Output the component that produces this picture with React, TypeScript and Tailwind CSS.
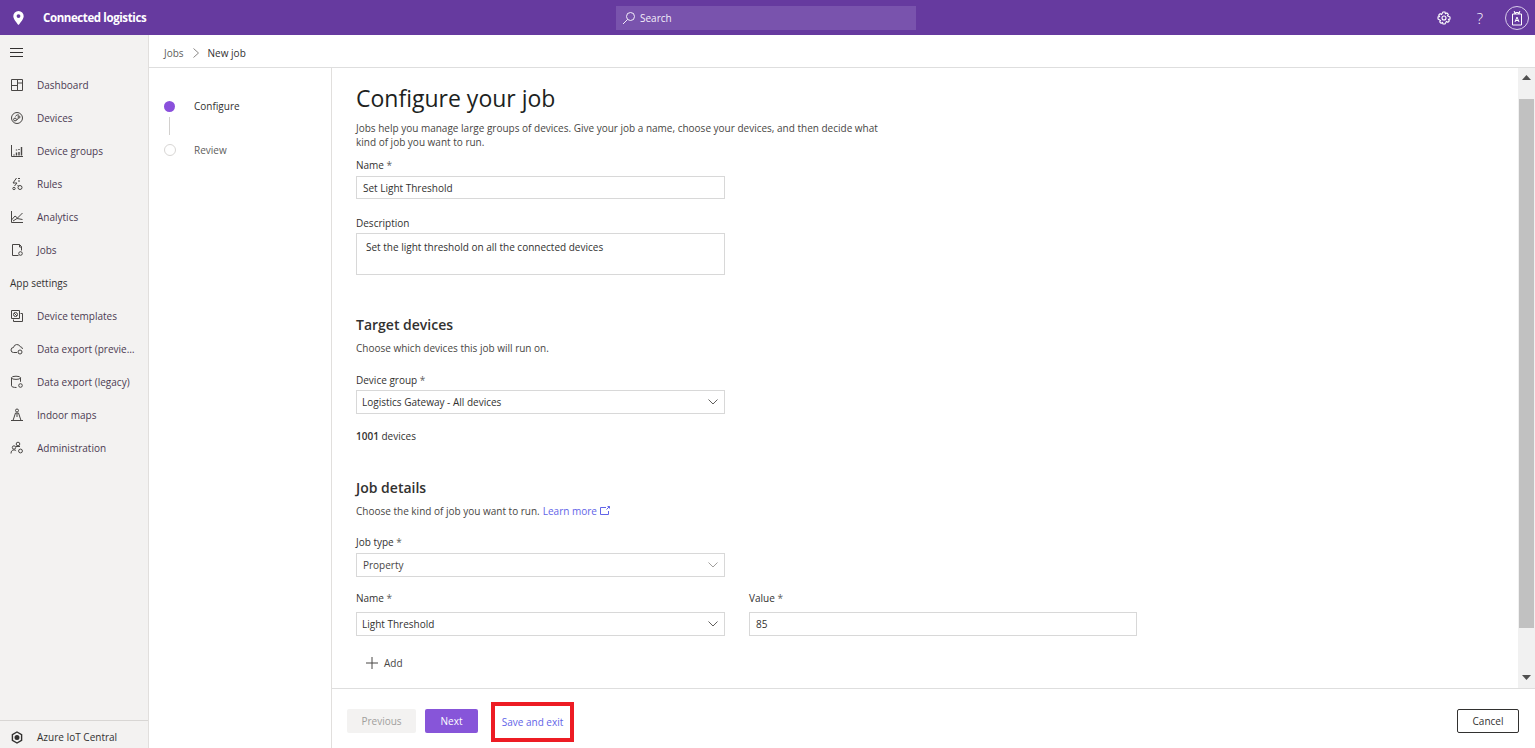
import React from "react";

const S = ({ children, size = 14, sw = 1 }: { children: React.ReactNode; size?: number; sw?: number }) => (
  <svg width={size} height={size} viewBox="0 0 14 14" fill="none" stroke="currentColor" strokeWidth={sw}>{children}</svg>
);

const icons: Record<string, React.ReactNode> = {
  dashboard: <S><path d="M1.5 1.5h11v11h-11zM1.5 7.5h6M7.5 1.5v11M7.5 5h5" /></S>,
  devices: <S><circle cx="7" cy="7" r="5.5" /><circle cx="5" cy="8.5" r="1.4" /><circle cx="9" cy="6" r="1" /><path d="M5.5 5.5C6 4 8 3.5 9 4.2M6.5 9.5l2-2.5" /></S>,
  groups: <S><path d="M1.5 1v11.5h11.5" /><path d="M4 10.5v1M6.5 8.5v3M6.5 5.5v1M9 8v3.5M9 5v1M11.5 3v8.5" strokeWidth="1.4" /></S>,
  rules: <S><path d="M6.5 1L3 6h4L4.5 9M8 1.5h2M8 4h2" /><circle cx="10" cy="10.5" r="2" /><circle cx="4" cy="11.5" r="1.2" /><path d="M7.5 8l1 1" /></S>,
  analytics: <S><path d="M1.5 1v11.5H13" /><path d="M1.5 10l3.5-4 2.5 2L12.5 3M3 11l4-2.5 5.5 1" /></S>,
  jobs: <S><path d="M8.5 12.5h-6v-11h7l2 2v4" /><circle cx="10.5" cy="10.5" r="1.8" /><path d="M9.5 1.5v2.5h2" /></S>,
  templates: <S><path d="M1.5 1.5h8v8h-8z" /><path d="M3.5 10.5v2h9v-8h-2" /><circle cx="5.5" cy="5.5" r="2" /><path d="M4 4l3 3" /></S>,
  cloud: <S><path d="M7 10.5H3.5a2.5 2.5 0 0 1 0-5 3.5 3.5 0 0 1 6.7-.8A2.5 2.5 0 0 1 12.5 7" /><circle cx="10" cy="10" r="2" /></S>,
  db: <S><ellipse cx="6" cy="2.8" rx="4.5" ry="1.6" /><path d="M1.5 2.8v8c0 1 2 1.7 5 1.7M10.5 2.8v4" /><circle cx="10.5" cy="10.5" r="1.8" /></S>,
  maps: <S><circle cx="7" cy="2.5" r="1.5" /><path d="M5.5 5h3L11 12.5H3zM1 12.5h12M7 5v4" /></S>,
  admin: <S><circle cx="8" cy="3" r="1.8" /><circle cx="4" cy="6.5" r="1.7" /><path d="M1 12.5c0-2.5 1.3-3.6 3-3.6 1 0 1.6.3 2.1.8M6 5.5h4" /><circle cx="10.5" cy="10" r="1.9" /></S>,
};

const nav1 = [["dashboard", "Dashboard"], ["devices", "Devices"], ["groups", "Device groups"], ["rules", "Rules"], ["analytics", "Analytics"], ["jobs", "Jobs"]];
const nav2 = [["templates", "Device templates"], ["cloud", "Data export (previe…"], ["db", "Data export (legacy)"], ["maps", "Indoor maps"], ["admin", "Administration"]];

const NavItem = ({ icon, label }: { icon: string; label: string }) => (
  <div className="flex h-[33px] items-center pl-[10px] text-[#4b3a52]">
    <span className="flex w-[27px] shrink-0 text-[#484644]">{icons[icon]}</span>
    <span className="whitespace-nowrap">{label}</span>
  </div>
);

const Label = ({ children, className = "" }: { children: React.ReactNode; className?: string }) => (
  <div className={"h-[14px] font-medium text-[#323130] " + className}>{children}</div>
);

const Chevron = ({ color = "#605e5c" }: { color?: string }) => (
  <svg width="10" height="6" viewBox="0 0 10 6" fill="none" stroke={color} strokeWidth="1"><path d="M.5.5L5 5 9.5.5" /></svg>
);

const Select = ({ value, className = "", chevron, textClass = "" }: { value: string; className?: string; chevron?: string; textClass?: string }) => (
  <div className={"flex h-[24px] w-[369px] items-center justify-between border border-[#d8d8d8] pl-[5px] pr-[6px] text-[#323130] " + className}>
    <span className={textClass}>{value}</span>
    <Chevron color={chevron} />
  </div>
);

const Req = () => <span className="font-normal text-[#605e5c]">*</span>;

export default function App() {
  return (
    <div className="flex h-[748px] w-[1535px] flex-col overflow-hidden bg-white text-[10px] leading-[14px] text-[#323130] [font-family:'Open_Sans','Noto_Sans',sans-serif]">
      <header className="flex h-[35px] shrink-0 items-center bg-[#663a9f] text-white">
        <div className="flex w-[616px] items-center">
          <svg className="ml-[13px]" width="11" height="14" viewBox="0 0 11 14" fill="white">
            <path fillRule="evenodd" d="M5.5 0A5.2 5.2 0 0 0 .3 5.2C.3 8.4 5.5 14 5.5 14s5.2-5.6 5.2-8.8A5.2 5.2 0 0 0 5.5 0zm0 7a1.9 1.9 0 1 1 0-3.8 1.9 1.9 0 0 1 0 3.8z" />
          </svg>
          <span className="ml-[19px] text-[11.5px] font-bold tracking-[-0.4px]">Connected logistics</span>
        </div>
        <div className="flex h-[24px] w-[300px] items-center bg-[#7953ad] pl-[6px] text-[#f3eefa]">
          <svg width="14" height="14" viewBox="0 0 14 14" fill="none" stroke="currentColor"><circle cx="8.5" cy="5.5" r="4" /><path d="M5.5 8.5L1 13" /></svg>
          <span className="ml-[4px]">Search</span>
        </div>
        <div className="ml-auto flex items-center pr-[6px]">
          <svg width="14" height="14" viewBox="0 0 14 14" fill="none" stroke="white" strokeWidth="1.1">
            <circle cx="7" cy="7" r="2" />
            <path d="M6 1h2l.4 1.7 1.5-.8 1.4 1.4-.8 1.5L13 6v2l-1.5.4.8 1.5-1.4 1.4-1.5-.8L8 13H6l-.4-1.5-1.5.8-1.4-1.4.8-1.5L1 8V6l1.5-.4-.8-1.5 1.4-1.4 1.5.8z" />
          </svg>
          <span className="ml-[22px] flex w-[14px] justify-center text-[15px] font-light leading-[16px] text-white">?</span>
          <div className="ml-[18px] flex h-[24px] w-[24px] items-center justify-center rounded-full border border-[#d9cdea]">
            <svg width="12" height="16" viewBox="0 0 12 16" fill="none" stroke="white">
              <path d="M1.5 4h9v11h-9zM4 4l-.8-3M8 4l.8-3M4.5 4V2.5h3V4M4 12l2-5 2 5M4.8 10.5h2.4" />
            </svg>
          </div>
        </div>
      </header>

      <div className="flex min-h-0 flex-1">
        <aside className="flex w-[149px] shrink-0 flex-col border-r border-[#e1dfdd] bg-[#f3f2f1]">
          <div className="flex h-[33px] items-center pl-[10px] pt-[1px]">
            <svg width="13" height="9" viewBox="0 0 13 9" stroke="#323130"><path d="M0 .5h13M0 4.5h13M0 8.5h13" /></svg>
          </div>
          <div className="flex flex-col">
            {nav1.map(([i, l]) => <NavItem key={l} icon={i} label={l} />)}
            <div className="flex h-[33px] items-center pl-[10px] font-medium text-[#323130]">App settings</div>
            {nav2.map(([i, l]) => <NavItem key={l} icon={i} label={l} />)}
          </div>
          <div className="mt-auto flex h-[28px] items-start border-t border-[#d8d6d4] pl-[11px] pt-[9px] text-[#323130]">
            <svg className="mt-px" width="12" height="13" viewBox="0 0 12 13" fill="none" stroke="#323130" strokeWidth="1.4">
              <path d="M6 1l4.6 2.7v5.6L6 12 1.4 9.3V3.7z" /><circle cx="6" cy="6.5" r="1.8" fill="#323130" />
            </svg>
            <span className="ml-[14px]">Azure IoT Central</span>
          </div>
        </aside>

        <div className="flex min-w-0 flex-1 flex-col">
          <div className="flex h-[33px] shrink-0 items-center border-b border-[#dedede] pl-[15px] pt-[3px]">
            <span className="text-[#605e5c]">Jobs</span>
            <svg className="mx-[9px]" width="6" height="10" viewBox="0 0 6 10" fill="none" stroke="#8a8886"><path d="M.5.5l5 4.5-5 4.5" /></svg>
            <span className="font-medium text-[#323130]">New job</span>
          </div>

          <div className="flex min-h-0 flex-1">
            <nav className="w-[183px] shrink-0 border-r border-[#e1dfdd] pl-[15px] pt-[32px]">
              <div className="flex h-[12px] items-center">
                <span className="h-[11px] w-[11px] rounded-full bg-[#8a50dc]" />
                <span className="ml-[19px] font-medium text-[#323130]">Configure</span>
              </div>
              <div className="ml-[5px] mt-[5px] h-[18px] w-px bg-[#d2d0ce]" />
              <div className="mt-[9px] flex h-[12px] items-center">
                <span className="h-[12px] w-[12px] rounded-full border border-[#d8d6d4] bg-white" />
                <span className="ml-[18px] text-[#605e5c]">Review</span>
              </div>
            </nav>

            <div className="flex min-w-0 flex-1 flex-col">
              <div className="flex min-h-0 flex-1">
                <main className="min-w-0 flex-1 overflow-hidden pl-[24px] pt-[16px]">
                  <h1 className="h-[28px] text-[23px] font-normal leading-[28px] text-[#201f1e]">Configure your job</h1>
                  <p className="mt-[9px] w-[530px] text-[#484644]">Jobs help you manage large groups of devices. Give your job a name, choose your devices, and then decide what kind of job you want to run.</p>
                  <Label className="mt-[9px]">Name <Req /></Label>
                  <div className="mt-[4px] flex h-[23px] w-[369px] items-center border border-[#d8d8d8] pl-[6px]">Set Light Threshold</div>
                  <Label className="mt-[17px]">Description</Label>
                  <div className="mt-[3px] h-[42px] w-[369px] border border-[#d8d8d8] pl-[9px] pt-[6px]">Set the light threshold on all the connected devices</div>

                  <h2 className="mt-[41px] h-[18px] text-[14px] font-semibold leading-[18px] text-[#323130]">Target devices</h2>
                  <p className="mt-[7px] text-[#484644]">Choose which devices this job will run on.</p>
                  <Label className="mt-[18px]">Device group <Req /></Label>
                  <Select value="Logistics Gateway - All devices" className="mt-[3px]" />
                  <p className="mt-[15px]"><span className="font-semibold">1001</span> devices</p>

                  <h2 className="mt-[36px] h-[18px] text-[14px] font-semibold leading-[18px] text-[#323130]">Job details</h2>
                  <p className="mt-[7px] flex items-center text-[#484644]">
                    Choose the kind of job you want to run.
                    <span className="ml-[3px] text-[#6264e8]">Learn more</span>
                    <svg className="ml-[3px] mb-[2px]" width="10" height="9" viewBox="0 0 10 9" fill="none" stroke="#6264e8"><path d="M6 1.5H.5v7h8V5M6.5 3.5L9.5.5M7.5.5h2v2" /></svg>
                  </p>
                  <Label className="mt-[17px]">Job type <Req /></Label>
                  <Select value="Property" className="mt-[4px]" chevron="#a19f9d" textClass="pl-[1px] text-[#484644]" />
                  <div className="mt-[14px] flex gap-[24px]">
                    <div className="w-[369px]">
                      <Label>Name <Req /></Label>
                      <Select value="Light Threshold" className="mt-[7px]" />
                    </div>
                    <div className="w-[388px]">
                      <Label>Value <Req /></Label>
                      <div className="mt-[7px] flex h-[24px] items-center border border-[#d8d8d8] pl-[6px]">85</div>
                    </div>
                  </div>
                  <div className="ml-[10px] mt-[20px] flex h-[14px] items-center text-[#484644]">
                    <svg width="12" height="12" viewBox="0 0 12 12" stroke="#484644"><path d="M6 0v12M0 6h12" /></svg>
                    <span className="ml-[6px]">Add</span>
                  </div>
                </main>

                <div className="flex w-[17px] shrink-0 flex-col items-center bg-[#f1f1f1] pt-[7px]">
                  <svg width="9" height="5" viewBox="0 0 9 5" fill="#505050"><path d="M4.5 0L9 5H0z" /></svg>
                  <div className="mt-[19px] h-[529px] w-[15px] bg-[#c1c1c1]" />
                  <svg className="mt-[47px]" width="9" height="5" viewBox="0 0 9 5" fill="#505050"><path d="M4.5 5L0 0h9z" /></svg>
                </div>
              </div>

              <footer className="flex h-[60px] shrink-0 items-start border-t border-[#dedede] pl-[15px] pr-[16px]">
                <button className="mt-[20px] h-[24px] w-[69px] rounded-[2px] bg-[#f3f2f1] text-[10px] text-[#a19f9d]">Previous</button>
                <button className="ml-[9px] mt-[20px] h-[24px] w-[53px] rounded-[2px] bg-[#8755d9] text-[10px] font-medium text-white">Next</button>
                <button className="ml-[13px] mt-[13px] h-[40px] w-[83px] border-[4px] border-[#ed1c24] text-[10px] text-[#6264e8]">Save and exit</button>
                <button className="ml-auto mt-[20px] h-[24px] w-[62px] rounded-[2px] border border-[#323130] text-[10px] text-[#323130]">Cancel</button>
              </footer>
            </div>
          </div>
        </div>
      </div>
    </div>
  );
}
